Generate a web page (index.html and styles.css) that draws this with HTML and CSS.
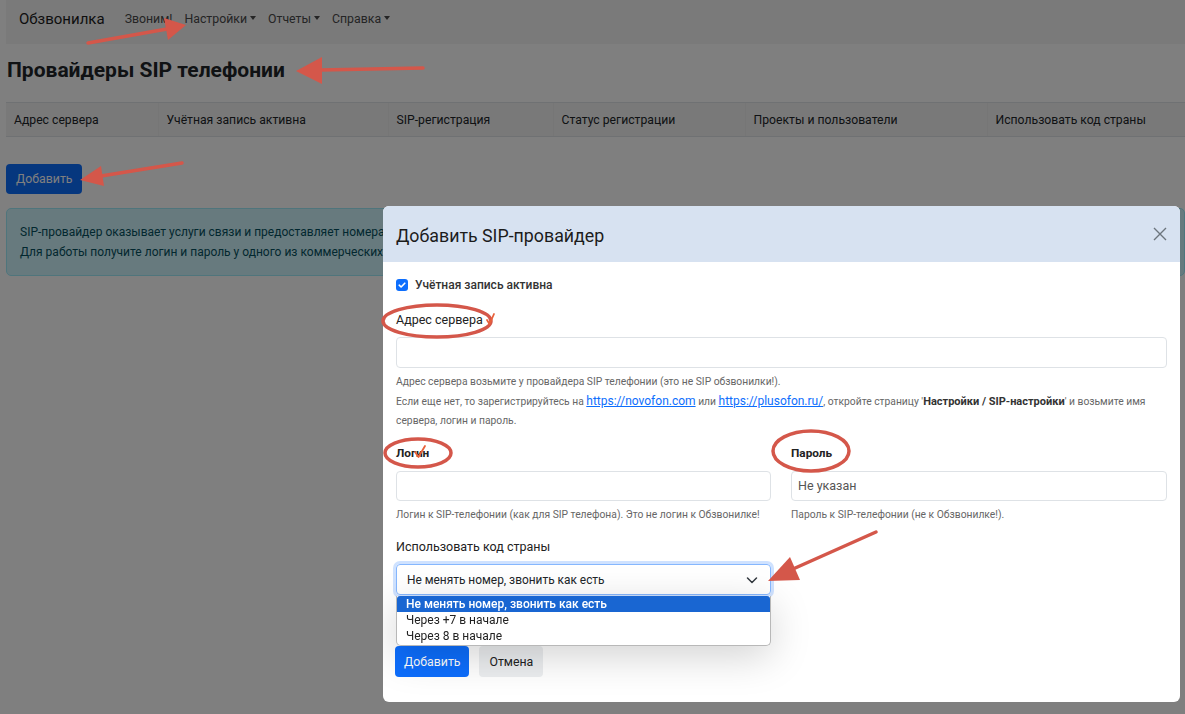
FILE: index.html
```html
<!DOCTYPE html>
<html lang="ru">
<head>
    <meta charset="UTF-8">
    <meta name="viewport" content="width=device-width, initial-scale=1.0">
    <title>Обзвонилка - Провайдеры SIP телефонии</title>
    <link rel="stylesheet" href="styles.css">
</head>
<body>
    <div class="page">
        <nav class="navbar">
            <a href="#" class="brand">Обзвонилка</a>
            <a href="#" class="nav-link">Звоним!</a>
            <a href="#" class="nav-link dropdown">Настройки</a>
            <a href="#" class="nav-link dropdown">Отчеты</a>
            <a href="#" class="nav-link dropdown">Справка</a>
        </nav>

        <h1>Провайдеры SIP телефонии</h1>

        <table class="providers">
            <thead>
                <tr>
                    <th class="col-server">Адрес сервера</th>
                    <th class="col-active">Учётная запись активна</th>
                    <th class="col-sip">SIP-регистрация</th>
                    <th class="col-status">Статус регистрации</th>
                    <th class="col-projects">Проекты и пользователи</th>
                    <th>Использовать код страны</th>
                </tr>
            </thead>
        </table>

        <button class="btn btn-primary add-btn">Добавить</button>

        <div class="alert">
            <div>SIP-провайдер оказывает услуги связи и предоставляет номера телефонов для исходящих звонков.</div>
            <div>Для работы получите логин и пароль у одного из коммерческих SIP-провайдеров.</div>
        </div>
    </div>

    <div class="backdrop"></div>

    <div class="modal">
        <div class="modal-header">
            <span class="modal-title">Добавить SIP-провайдер</span>
            <button class="close" aria-label="Закрыть">
                <svg width="14" height="14" viewBox="0 0 14 14"><path d="M1 1 L13 13 M13 1 L1 13" stroke="#6c757d" stroke-width="1.4" fill="none"/></svg>
            </button>
        </div>
        <div class="modal-body">
            <label class="check">
                <span class="checkbox">
                    <svg width="12" height="12" viewBox="0 0 12 12"><path d="M3.2 6.2 L5.1 8 L8.8 4.2" stroke="#fff" stroke-width="1.6" fill="none" stroke-linecap="round" stroke-linejoin="round"/></svg>
                </span>
                Учётная запись активна
            </label>

            <div class="group">
                <label class="label">Адрес сервера</label>
                <input class="input" type="text">
                <div class="help">
                    <div>Адрес сервера возьмите у провайдера SIP телефонии (это не SIP обзвонилки!).</div>
                    <div>Если еще нет, то зарегистрируйтесь на <a href="#">https://novofon.com</a> или <a href="#">https://plusofon.ru/</a>, откройте страницу '<b>Настройки / SIP-настройки</b>' и возьмите имя сервера, логин и пароль.</div>
                </div>
            </div>

            <div class="row">
                <div class="group">
                    <label class="label bold">Логин</label>
                    <input class="input" type="text">
                    <div class="help">Логин к SIP-телефонии (как для SIP телефона). Это не логин к Обзвонилке!</div>
                </div>
                <div class="group">
                    <label class="label bold">Пароль</label>
                    <input class="input" type="text" placeholder="Не указан">
                    <div class="help">Пароль к SIP-телефонии (не к Обзвонилке!).</div>
                </div>
            </div>

            <div class="group country">
                <label class="label">Использовать код страны</label>
                <div class="select-wrap">
                    <div class="select">
                        <span>Не менять номер, звонить как есть</span>
                        <svg width="12" height="12" viewBox="0 0 12 12"><path d="M1.5 4 L6 8.5 L10.5 4" stroke="#343a40" stroke-width="1.5" fill="none" stroke-linecap="round" stroke-linejoin="round"/></svg>
                    </div>
                    <ul class="options">
                        <li class="selected">Не менять номер, звонить как есть</li>
                        <li>Через +7 в начале</li>
                        <li>Через 8 в начале</li>
                    </ul>
                </div>
            </div>

            <div class="actions">
                <button class="btn btn-primary">Добавить</button>
                <button class="btn btn-light">Отмена</button>
            </div>
        </div>
    </div>

    <!-- annotation marks drawn over the screenshot -->
    <svg class="marks" width="1185" height="714" viewBox="0 0 1185 714">
        <g stroke="#d4574a" stroke-width="3.5" stroke-linecap="round" fill="none">
            <line x1="88" y1="43" x2="167" y2="29"/>
            <line x1="423" y1="68" x2="320" y2="70"/>
            <line x1="182" y1="163" x2="101" y2="176"/>
            <line x1="876" y1="532" x2="793" y2="569"/>
            <ellipse cx="437" cy="321" rx="54" ry="16"/>
            <ellipse cx="418" cy="453" rx="33" ry="14"/>
            <ellipse cx="811" cy="451" rx="38" ry="20"/>
        </g>
        <g fill="#d4574a">
            <polygon points="186,25 168,40 164,18"/>
            <polygon points="296,71 322,84 322,57"/>
            <polygon points="80,180 104,186 101,166"/>
            <polygon points="768,581 800,580 790,557"/>
        </g>
        <g stroke="#e8603a" stroke-width="1.8" stroke-linecap="round" stroke-linejoin="round" fill="none">
            <path d="M487 320 L489.5 324 L494 314"/>
            <path d="M415 452 L418.5 457 L425 446"/>
        </g>
    </svg>
</body>
</html>
```

FILE: styles.css
```css
:root {
    --font: "Roboto", "Liberation Sans", sans-serif;
    --text-color: #212529;
    --muted: #6c757d;
    --primary: #0d6efd;
    --border: #dee2e6;
}

body {
    margin: 0;
    font-family: var(--font);
    color: var(--text-color);
    background: #fff;
    overflow: hidden;
}

.page {
    padding: 0 0 0 6px;
}

.navbar {
    display: flex;
    align-items: center;
    height: 44px;
    box-sizing: border-box;
    padding: 0 13px 6px;
    background: #f4f4f5;
}

.brand {
    font-size: 15px;
    color: #1c1c1c;
    text-decoration: none;
    margin-right: 14px;
}

.nav-link {
    font-size: 12.3px;
    color: #4a4a4a;
    text-decoration: none;
    padding: 0 6px;
}

.dropdown:after {
    content: "";
    display: inline-block;
    margin-left: 3px;
    vertical-align: 3px;
    border-top: 4px solid #4a4a4a;
    border-left: 3.5px solid transparent;
    border-right: 3.5px solid transparent;
}

h1 {
    font-size: 21px;
    font-weight: bold;
    line-height: 26px;
    margin: 13px 0 19px 1px;
}

.providers {
    width: 100%;
    border-collapse: collapse;
    font-size: 12.2px;
}

.providers th {
    text-align: left;
    font-weight: normal;
    height: 34px;
    box-sizing: border-box;
    padding: 0 8px;
    background: #f3f3f3;
    border-top: 1px solid var(--border);
    border-bottom: 1px solid var(--border);
    border-left: 1px solid #ececec;
}

.providers th:first-child {
    border-left: none;
}

.col-server { width: 152px; }
.col-active { width: 230px; }
.col-sip { width: 165px; }
.col-status { width: 192px; }
.col-projects { width: 242px; }

.btn {
    font-family: var(--font);
    font-size: 12.3px;
    border: none;
    border-radius: 4px;
    height: 31px;
    padding: 0 9px;
    cursor: pointer;
}

.btn-primary {
    background: var(--primary);
    color: #fff;
}

.btn-light {
    background: #eceef0;
    color: #222;
    padding: 0 10px;
}

.add-btn {
    display: block;
    margin-top: 27px;
    height: 30px;
    padding: 0 10px;
}

.alert {
    margin-top: 14px;
    padding: 13px 13px;
    font-size: 12px;
    line-height: 20px;
    color: #055160;
    background: #cff4fc;
    border: 1px solid #9eeaf9;
    border-radius: 5px;
    white-space: nowrap;
    overflow: hidden;
}

.backdrop {
    position: fixed;
    inset: 0;
    background: rgba(0, 0, 0, 0.5);
}

.modal {
    position: fixed;
    left: 383px;
    top: 206px;
    width: 797px;
    height: 496px;
    background: #fff;
    border-radius: 6px;
    overflow: hidden;
}

.modal-header {
    height: 56px;
    box-sizing: border-box;
    padding: 0 13px;
    display: flex;
    align-items: center;
    justify-content: space-between;
    background: #d7e2f1;
}

.modal-title {
    font-size: 17.8px;
    color: #1c1c1c;
    margin-top: 2px;
}

.close {
    background: none;
    border: none;
    padding: 0;
    display: flex;
}

.modal-body {
    padding: 14px 13px 0;
    font-size: 12px;
}

.check {
    display: flex;
    align-items: center;
    gap: 7px;
    line-height: 18px;
    font-weight: 500;
    color: #333;
}

.checkbox {
    width: 12px;
    height: 12px;
    border-radius: 3px;
    background: var(--primary);
    display: flex;
}

.label {
    display: block;
    font-size: 12.5px;
    line-height: 20px;
    color: #222;
}

.label.bold {
    font-weight: bold;
    font-size: 11.8px;
}

.group {
    margin-top: 16px;
}

.group .label {
    margin-bottom: 7px;
}

.input {
    display: block;
    width: 100%;
    box-sizing: border-box;
    height: 31px;
    padding: 0 6px;
    font-family: var(--font);
    font-size: 12.5px;
    border: 1px solid var(--border);
    border-radius: 4px;
}

.input::placeholder {
    color: #555;
}

.help {
    margin-top: 4px;
    font-size: 10.3px;
    line-height: 19.5px;
    color: #666;
}

.help a {
    color: var(--primary);
    font-size: 12px;
    line-height: 1;
}

.help b {
    color: #333;
    font-size: 11px;
    line-height: 1;
}

.row {
    display: grid;
    grid-template-columns: 375px 376px;
    gap: 20px;
}

.row .group {
    margin-top: 12px;
}

.row .label {
    margin-bottom: 8px;
}

.row .input {
    height: 30px;
}

.group.country {
    margin-top: 13px;
    width: 375px;
}

.select-wrap {
    position: relative;
}

.select {
    height: 31px;
    box-sizing: border-box;
    padding: 0 12px 0 10px;
    display: flex;
    align-items: center;
    justify-content: space-between;
    font-size: 11.9px;
    border: 1px solid #86b7fe;
    border-radius: 4px;
    box-shadow: 0 0 0 3px rgba(13, 110, 253, 0.2);
}

.options {
    position: absolute;
    top: 32px;
    left: 0;
    right: 0;
    margin: 0;
    padding: 0 0 1px;
    list-style: none;
    background: #fff;
    border: 1px solid #b8b8b8;
    border-top: none;
    border-radius: 0 0 5px 5px;
    box-shadow: 0 10px 40px rgba(0, 0, 0, 0.18);
    font-size: 12px;
    z-index: 2;
}

.options li {
    height: 16px;
    line-height: 16px;
    padding: 0 9px;
    color: #222;
}

.options li.selected {
    background: #1966d2;
    color: #fff;
    font-weight: 500;
    border-radius: 3px 3px 0 0;
}

.actions {
    display: flex;
    gap: 10px;
    margin: 51px 0 0 -1px;
}

.marks {
    position: fixed;
    left: 0;
    top: 0;
    pointer-events: none;
}
```
